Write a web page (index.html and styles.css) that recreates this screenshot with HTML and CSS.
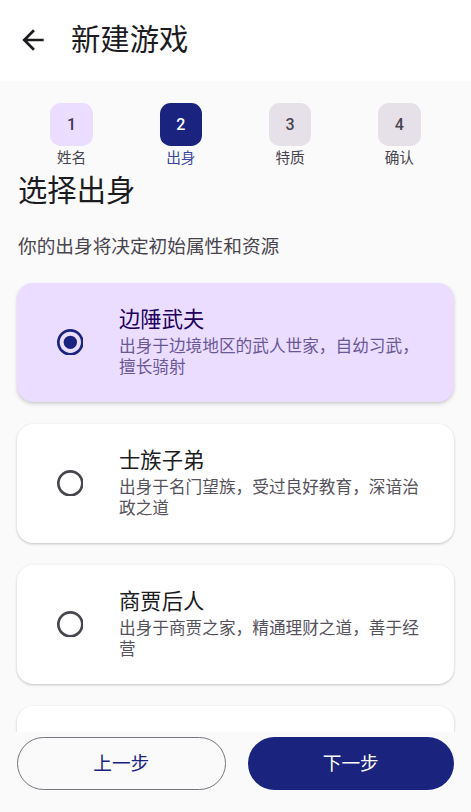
FILE: index.html
```html
<!DOCTYPE html>
<html lang="zh-CN">
<head>
<meta charset="utf-8">
<title>新建游戏</title>
<link rel="stylesheet" href="styles.css">
</head>
<body>
<div class="app">
  <header class="appbar">
    <svg class="back" viewBox="0 0 24 24" width="32" height="32" aria-hidden="true">
      <path d="M20 11H7.83l5.59-5.59L12 4l-8 8 8 8 1.41-1.41L7.83 13H20v-2z" fill="#1C1B1F"/>
    </svg>
    <h1 class="title">新建游戏</h1>
  </header>

  <main class="content">
    <div class="steps">
      <div class="step done"><div class="step-box">1</div><div class="step-label">姓名</div></div>
      <div class="step current"><div class="step-box">2</div><div class="step-label">出身</div></div>
      <div class="step todo"><div class="step-box">3</div><div class="step-label">特质</div></div>
      <div class="step todo"><div class="step-box">4</div><div class="step-label">确认</div></div>
    </div>

    <h2 class="heading">选择出身</h2>
    <p class="sub">你的出身将决定初始属性和资源</p>

    <div class="list">
      <div class="card selected">
        <div class="radio-wrap">
          <svg class="radio" viewBox="0 0 20 20" width="26.67" height="26.67" aria-hidden="true">
            <circle cx="10" cy="10" r="9" fill="none" stroke="#1A237E" stroke-width="2"/>
            <circle cx="10" cy="10" r="5" fill="#1A237E"/>
          </svg>
        </div>
        <div class="card-text">
          <div class="card-title">边陲武夫</div>
          <div class="card-desc">出身于边境地区的武人世家，自幼习武，擅长骑射</div>
        </div>
      </div>

      <div class="card">
        <div class="radio-wrap">
          <svg class="radio" viewBox="0 0 20 20" width="26.67" height="26.67" aria-hidden="true">
            <circle cx="10" cy="10" r="9" fill="none" stroke="#49454F" stroke-width="2"/>
          </svg>
        </div>
        <div class="card-text">
          <div class="card-title">士族子弟</div>
          <div class="card-desc">出身于名门望族，受过良好教育，深谙治政之道</div>
        </div>
      </div>

      <div class="card">
        <div class="radio-wrap">
          <svg class="radio" viewBox="0 0 20 20" width="26.67" height="26.67" aria-hidden="true">
            <circle cx="10" cy="10" r="9" fill="none" stroke="#49454F" stroke-width="2"/>
          </svg>
        </div>
        <div class="card-text">
          <div class="card-title">商贾后人</div>
          <div class="card-desc">出身于商贾之家，精通理财之道，善于经营</div>
        </div>
      </div>

      <div class="card"></div>
    </div>
  </main>

  <footer class="bottom">
    <button class="btn outline">上一步</button>
    <button class="btn filled">下一步</button>
  </footer>
</div>
</body>
</html>
```

FILE: styles.css
```css
* { box-sizing: border-box; }

html, body {
  margin: 0;
  padding: 0;
  background: #FAFAFA;
}

body {
  font-family: Roboto, "Noto Sans CJK SC", sans-serif;
  color: #1C1B1F;
}

.app {
  width: 471px;
  height: 812px;
  display: flex;
  flex-direction: column;
  overflow: hidden;
}

.appbar {
  height: 81px;
  flex: none;
  background: #FFFFFF;
  display: flex;
  align-items: center;
  padding-left: 17px;
  padding-bottom: 2px;
}

.back {
  display: block;
  flex: none;
}

.title {
  margin: 0 0 0 22px;
  font-size: 29.33px;
  font-weight: 400;
  line-height: 36px;
  color: #1C1B1F;
}

.content {
  flex: 1;
  min-height: 0;
  overflow: hidden;
  padding: 22px 17px 0;
  display: flex;
  flex-direction: column;
}

.steps {
  display: flex;
}

.step {
  flex: 1;
  display: flex;
  flex-direction: column;
  align-items: center;
}

.step-box {
  width: 42.67px;
  height: 42.67px;
  border-radius: 10.67px;
  display: flex;
  align-items: center;
  justify-content: center;
  font-size: 16px;
  font-weight: 500;
}

.done .step-box { background: #EADDFF; color: #3E3850; }
.current .step-box { background: #1A237E; color: #FFFFFF; }
.todo .step-box { background: #E6E0E9; color: #49454F; }

.step-label {
  margin-top: 2px;
  font-size: 14.67px;
  line-height: 20px;
  color: #49454F;
}

.current .step-label { color: #3A469E; }

.heading {
  margin: 5px 0 0 1px;
  font-size: 29.33px;
  font-weight: 400;
  line-height: 36px;
  color: #1C1B1F;
}

.sub {
  margin: 26px 0 0 1px;
  font-size: 18.67px;
  line-height: 24px;
  color: #49454F;
}

.list {
  margin-top: 24px;
  display: flex;
  flex-direction: column;
  gap: 22px;
}

.card {
  flex: none;
  height: 119px;
  border-radius: 16px;
  background: #FFFFFF;
  box-shadow: 0 1px 3px rgba(0, 0, 0, 0.16), 0 1px 2px rgba(0, 0, 0, 0.08);
  display: flex;
  align-items: center;
  padding: 0 24px 0 21px;
}

.card.selected {
  background: #EADDFF;
  box-shadow: 0 2px 4px rgba(0, 0, 0, 0.14), 0 1px 2px rgba(0, 0, 0, 0.08);
}

.radio-wrap {
  width: 64px;
  height: 64px;
  flex: none;
  display: flex;
  align-items: center;
  justify-content: center;
}

.radio { display: block; }

.card-text {
  margin-left: 17px;
  flex: 1;
  min-width: 0;
}

.card-title {
  font-size: 21.33px;
  line-height: 28px;
  color: #1C1B1F;
}

.card-desc {
  margin-top: 2px;
  font-size: 16.67px;
  line-height: 21px;
  color: #56525C;
}

.selected .card-title { color: #21005D; }
.selected .card-desc { color: #6A5896; }

.bottom {
  flex: none;
  height: 80px;
  background: #FAFAFA;
  display: flex;
  gap: 22px;
  padding: 5px 17px 22px;
}

.btn {
  flex: 1;
  height: 53px;
  border-radius: 27px;
  font-family: Roboto, "Noto Sans CJK SC", sans-serif;
  font-size: 18.67px;
  font-weight: 400;
  line-height: 24px;
  padding: 0;
  cursor: pointer;
}

.btn.outline {
  background: transparent;
  border: 1.33px solid #79747E;
  color: #1A237E;
}

.btn.filled {
  background: #1A237E;
  border: none;
  color: #FFFFFF;
}
```
